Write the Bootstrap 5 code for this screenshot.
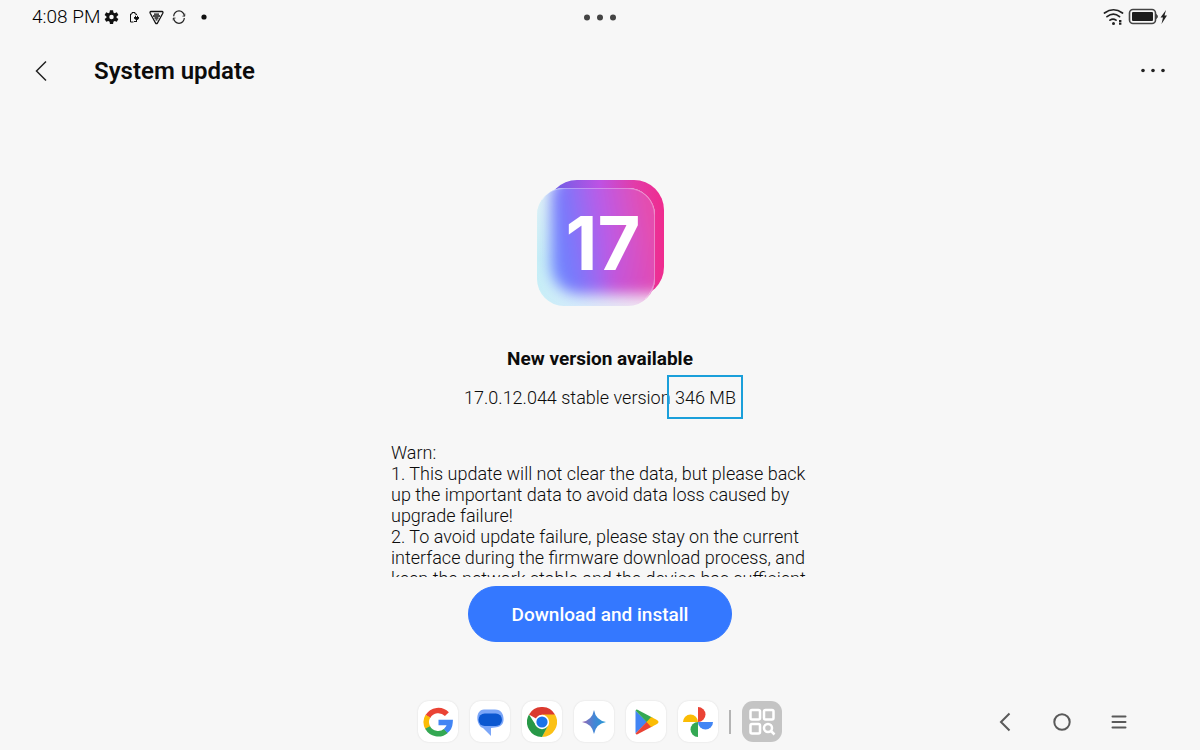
<!DOCTYPE html>
<html lang="en">
<head>
<meta charset="utf-8">
<meta name="viewport" content="width=device-width, initial-scale=1">
<title>System update</title>
<link href="https://cdn.jsdelivr.net/npm/bootstrap@5.3.0/dist/css/bootstrap.min.css" rel="stylesheet">
<style>
body { background: #f7f7f7; color: #0c0c0c; font-family: Roboto, "Noto Sans", sans-serif; font-size: 18px; font-weight: 360; line-height: 21px; }
svg { display: block; flex: none; }
.three-cols { display: grid; grid-template-columns: 1fr auto 1fr; align-items: center; }
.status-bar { height: 34px; padding: 0 32px; color: #000; }
.status-bar time { font-size: 19px; line-height: 20px; }
.status-icons { gap: 8px; margin-left: 4px; }
.title-bar { height: 74px; padding: 0 32px; }
.title-bar h1 { font-size: 24px; font-weight: 600; line-height: 28px; margin-left: 44px; }
.icon-btn { border: 0; background: none; padding: 0; color: inherit; display: block; }
.hero { margin-top: 72px; }
.hero-digits { font: 700 74px Inter, "Open Sans", sans-serif; fill: #fff; }
.headline { font-size: 19px; line-height: 21px; margin: 40px 0 18px; }
.size-mark { position: relative; }
.size-mark::after { content: ""; position: absolute; inset: -12px -7px -11px -8px; border: 2px solid #1a9fda; }
.notes { width: 434px; max-width: 100%; height: 135px; margin-top: 34px; padding-left: 8px; overflow: hidden; }
.notes p { margin: 0; }
.install-btn { width: 264px; height: 56px; padding: 8px 0 6px; margin-top: 9px; font-size: 19px; font-weight: 500; --bs-btn-bg: #3478ff; --bs-btn-border-color: #3478ff; --bs-btn-hover-bg: #2469f0; }
.dock { padding: 0 69px 8px; color: #555; }
.apps { gap: 12px; }
.app-tile { width: 40px; height: 41px; border-radius: 11px; background: #fff; box-shadow: 0 0 2px #0000001f; display: flex; align-items: center; justify-content: center; }
.app-tile.all-apps { background: #c4c4c4; box-shadow: none; }
.divider { width: 2px; height: 24px; margin: 0 -1px; background: #b4b4b4; }
.nav-keys { gap: 33px; }
</style>
</head>
<body class="min-vh-100 d-flex flex-column">

<div class="status-bar three-cols">
  <div class="d-flex align-items-center">
    <time>4:08 PM</time>
    <div class="status-icons d-flex align-items-center">
      <svg width="15" height="16" viewBox="0 0 24 24" aria-hidden="true"><path fill="#111" fill-rule="evenodd" d="M9.500 1h5l.6 3.600 2 1.200 3.400-1.300 2.500 4.300-2.900 2.200v2l2.900 2.200-2.500 4.300-3.400-1.300-2 1.200-.6 3.600h-5l-.6-3.600-2-1.200-3.400 1.300L1 15.200 3.900 13v-2L1 8.800l2.500-4.300 3.400 1.300 2-1.200zM12 8.400a3.600 3.600 0 1 0 0 7.200 3.600 3.600 0 0 0 0-7.200z"/></svg>
      <svg width="14" height="14" viewBox="0 0 14 14" fill="none" stroke="#111" aria-hidden="true"><path d="M6.500 12H3.500V4H5V2.500h3V4h1.500v1"/><path fill="#111" stroke="none" d="M7 7h1V5.800h1V7h1V5.800h1V7h1v1.500L10.500 10H10v2H7v-1h2v-1l-2-1.500z"/></svg>
      <svg width="15" height="15" viewBox="0 0 15 15" fill="none" stroke="#111" stroke-width="1.300" stroke-linejoin="round" aria-hidden="true"><path d="M2 1.500h11q1.400.3.800 1.700L8.500 13q-1 1.200-2 0L1.200 3.200Q.6 1.800 2 1.500z"/><path d="M5 4.200h5M4 6h7M5.500 8h4M6.500 9.800h2"/></svg>
      <svg width="14" height="14" viewBox="0 0 14 14" fill="none" stroke="#222" stroke-width="1.200" aria-hidden="true"><path d="M1.700 6.200A5.300 5.300 0 0 1 12.300 6.200M12.300 8A5.300 5.300 0 0 1 1.700 8"/><path d="M12.800 3.500v2.700h-2.400M1.200 10.500V8h2.400" stroke-width=".7"/></svg>
      <svg class="ms-1" width="14" height="6" viewBox="0 0 14 6" aria-hidden="true"><circle cx="6" cy="3" r="2.600" fill="#111"/></svg>
    </div>
  </div>
  <svg width="34" height="8" fill="#444" aria-hidden="true"><circle cx="4" cy="4.500" r="3"/><circle cx="17" cy="4.500" r="3"/><circle cx="30" cy="4.500" r="3"/></svg>
  <div class="d-flex align-items-center justify-content-end">
    <svg width="66" height="20" viewBox="0 0 66 20" fill="none" aria-hidden="true">
      <g stroke="#222" stroke-width="1.700" stroke-linecap="round"><path d="M2.500 6q9-6.500 18 0M5 9.700q6.500-5 12.500 0M8 13.200q3-2.300 6 0"/></g>
      <circle cx="11.500" cy="16.500" r="1.500" fill="#222"/><path d="M18.200 13v2.200M18.200 15.800v2" stroke="#222" stroke-width="2.400"/>
      <rect x="27.500" y="2.500" width="26" height="14" rx="3.500" stroke="#444" stroke-width="1.600"/><rect x="30" y="5" width="21" height="9" rx="1" fill="#1c1c1c"/><path d="M54.500 7.500q2 2 0 4z" fill="#444" stroke="#444"/>
      <path d="M64 3l-5.500 7.500h2.500l-1.500 6.500 5.500-8.500h-2.500z" fill="#222"/>
    </svg>
  </div>
</div>

<header class="title-bar d-flex align-items-center">
  <button class="icon-btn" type="button" aria-label="Back"><svg width="18" height="22" viewBox="0 0 18 22" fill="none" stroke="#222" stroke-width="1.500"><path d="M14 1.500L4.500 11l9.500 9.500"/></svg></button>
  <h1 class="mb-0">System update</h1>
  <button class="icon-btn ms-auto" type="button" aria-label="More options"><svg width="30" height="8" fill="#222"><circle cx="5" cy="3.500" r="1.800"/><circle cx="15" cy="3.500" r="1.800"/><circle cx="25" cy="3.500" r="1.800"/></svg></button>
</header>

<main class="flex-grow-1 d-flex flex-column align-items-center px-3">
  <svg class="hero" width="127" height="128" viewBox="0 0 127 128" role="img" aria-label="Version 17">
    <defs>
      <linearGradient id="back" x1="0" x2="1"><stop offset="0" stop-color="#6260e6"/><stop offset=".45" stop-color="#bd52e4"/><stop offset=".75" stop-color="#e23ca8"/><stop offset="1" stop-color="#ef2b8e"/></linearGradient>
      <linearGradient id="front" gradientUnits="userSpaceOnUse" x1="12" y1="80" x2="118" y2="62"><stop offset="0" stop-color="#6f8cff"/><stop offset=".22" stop-color="#7a78fb"/><stop offset=".56" stop-color="#b95ce8"/><stop offset=".84" stop-color="#d852c4"/><stop offset="1" stop-color="#e64dac"/></linearGradient>
      <linearGradient id="glow" x1="0" x2="0" y1="0" y2="1"><stop offset=".55" stop-color="#e040b0" stop-opacity="0"/><stop offset="1" stop-color="#e040b0" stop-opacity=".3"/></linearGradient>
      <linearGradient id="frost" x1="0" x2="1" y1=".6" y2=".8"><stop offset="0" stop-color="#c6eff6"/><stop offset=".4" stop-color="#d5ecfb"/><stop offset="1" stop-color="#f5e0f1"/></linearGradient>
      <linearGradient id="fade" x1="0" x2="0" y1="0" y2="1"><stop offset="0" stop-color="#f7f7f7" stop-opacity=".6"/><stop offset=".6" stop-color="#f7f7f7" stop-opacity="0"/></linearGradient>
      <clipPath id="pane"><rect y="8" width="118" height="118" rx="27"/></clipPath>
      <filter id="soft" x="-20%" y="-20%" width="140%" height="140%"><feGaussianBlur stdDeviation="7"/></filter>
    </defs>
    <rect x="10" y="0" width="117" height="117" rx="30" fill="url(#back)"/>
    <g clip-path="url(#pane)">
      <rect y="8" width="118" height="118" fill="url(#frost)"/>
      <rect y="8" width="118" height="118" fill="url(#fade)"/>
      <g filter="url(#soft)"><rect x="14" y="-10" width="130" height="124" rx="28" fill="url(#front)"/><rect x="70" y="-10" width="72" height="124" fill="url(#glow)"/></g>
    </g>
    <path d="M5 20Q12 8.500 27 8.500H91A26.500 26.500 0 0 1 117.500 35V99Q117 110 108 119" fill="none" stroke="#fff" stroke-opacity=".3"/>
    <text class="hero-digits" x="66" y="90" text-anchor="middle">17</text>
  </svg>
  <h2 class="headline fw-bold">New version available</h2>
  <p class="mb-0">17.0.12.044 stable version <span class="size-mark">346 MB</span></p>
  <div class="notes">
    <p>Warn:</p>
    <p>1. This update will not clear the data, but please back up the important data to avoid data loss caused by upgrade failure!</p>
    <p>2. To avoid update failure, please stay on the current interface during the firmware download process, and keep the network stable and the device has sufficient</p>
  </div>
  <button type="button" class="btn btn-primary rounded-pill install-btn">Download and install</button>
</main>

<footer class="dock three-cols">
  <span></span>
  <div class="apps d-flex align-items-center">
    <a class="app-tile" href="#" aria-label="Google"><svg width="30" height="30" viewBox="0 0 30 30" fill="none" stroke-width="5.500"><path d="M23.900 7.200A12 12 0 0 0 4.900 9.500" stroke="#ea4335"/><path d="M4.900 9a12 12 0 0 0 0 12" stroke="#fbbc05"/><path d="M4.600 20.500a12 12 0 0 0 18.400 3.300" stroke="#34a853"/><path d="M15.500 15.500H27A12 12 0 0 1 22.700 24" stroke="#4285f4"/></svg></a>
    <a class="app-tile" href="#" aria-label="Messages"><svg width="30" height="30" viewBox="0 0 30 30"><path fill="#7ba6f8" d="M9 2.500h11c7 0 9 6 8.500 11S24 20 20 20.500L16 21v8l-8-8C1 19-.5 3 9 2.500z"/><rect x="3.500" y="6.500" width="23.500" height="12.500" rx="6.200" fill="#0b57d0"/></svg></a>
    <a class="app-tile" href="#" aria-label="Chrome"><svg width="30" height="30" viewBox="0 0 30 30"><path fill="#db3a2f" d="M15 15L2 7.500A15 15 0 0 1 28 7.500z"/><path fill="#fbc116" d="M15 7.500h13A15 15 0 0 1 15 30l6-12z"/><path fill="#279847" d="M2 7.500A15 15 0 0 0 15 30l6.100-11.500L9 18.500z"/><circle cx="15" cy="15" r="7.200" fill="#fff"/><circle cx="15" cy="15" r="5.600" fill="#1a73e8"/></svg></a>
    <a class="app-tile" href="#" aria-label="Gemini"><svg width="24" height="24" viewBox="0 0 24 24"><defs><linearGradient id="gem"><stop offset="0" stop-color="#9b69b2"/><stop offset=".5" stop-color="#4386d6"/><stop offset="1" stop-color="#2799d4"/></linearGradient></defs><path fill="url(#gem)" d="M12 0q1.800 10.200 12 12-10.200 1.800-12 12-1.800-10.200-12-12Q10.200 10.200 12 0z"/></svg></a>
    <a class="app-tile" href="#" aria-label="Play Store"><svg width="26" height="28" viewBox="0 0 26 28"><defs><clipPath id="play"><path d="M4.500 1.800L24 12q3 2 0 4L4.500 26.200q-2 .8-2-1.700v-21q0-2.500 2-1.700z"/></clipPath></defs><g clip-path="url(#play)"><path fill="#4285f4" d="M0 0l14 14L0 28z"/><path fill="#34a853" d="M0 0l14 14.500L21 8V0z"/><path fill="#ea4335" d="M0 28l14-14.500L21 20v8z"/><path fill="#fbbc04" d="M13.500 14l6-6.500H27v13h-7.500z"/></g></svg></a>
    <a class="app-tile" href="#" aria-label="Photos"><svg width="30" height="30" viewBox="0 0 30 30"><path fill="#ea4335" d="M15 0a7.500 7.500 0 0 1 0 15z"/><path fill="#4285f4" d="M30 15a7.500 7.500 0 0 1-15 0z"/><path fill="#34a853" d="M15 30a7.500 7.500 0 0 1 0-15z"/><path fill="#fbbc04" d="M0 15a7.500 7.500 0 0 1 15 0z"/></svg></a>
    <span class="divider"></span>
    <button class="app-tile all-apps icon-btn" type="button" aria-label="All apps"><svg class="mx-auto" width="28" height="28" viewBox="0 0 28 28" fill="none" stroke="#fff" stroke-width="2.500"><rect x="2.500" y="2" width="9.500" height="9.500" rx="1.500"/><rect x="16" y="2" width="9.500" height="9.500" rx="1.500"/><rect x="2.500" y="16" width="9.500" height="9.500" rx="1.500"/><circle cx="20" cy="20" r="4"/><path d="M23 23l3.500 3.500"/></svg></button>
  </div>
  <div class="nav-keys d-flex justify-content-end align-items-center">
    <button class="icon-btn" type="button" aria-label="Navigate back"><svg width="24" height="24" viewBox="0 0 24 24" fill="none" stroke="#5a5a5a" stroke-width="2"><path d="M16.500 3.500L8 12l8.500 8.500"/></svg></button>
    <button class="icon-btn" type="button" aria-label="Home"><svg width="24" height="24" viewBox="0 0 24 24" fill="none" stroke="#5a5a5a" stroke-width="2"><circle cx="12" cy="12" r="7.700"/></svg></button>
    <button class="icon-btn" type="button" aria-label="Recent apps"><svg width="24" height="24" viewBox="0 0 24 24" fill="none" stroke="#5a5a5a" stroke-width="2" stroke-linecap="round"><path d="M5.500 6.500h13M5.500 12h13M5.500 17.500h13"/></svg></button>
  </div>
</footer>
<script src="https://cdn.jsdelivr.net/npm/bootstrap@5.3.0/dist/js/bootstrap.bundle.min.js"></script>
</body>
</html>
